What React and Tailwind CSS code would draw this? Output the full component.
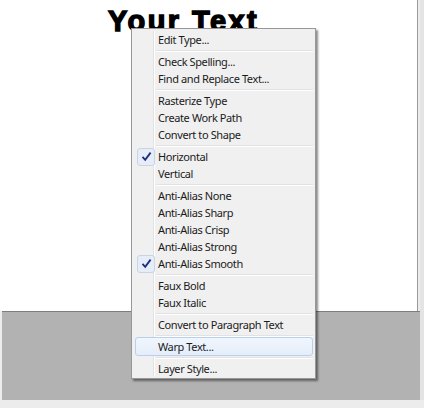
import React from "react";

const Check = () => (
  <div className="absolute left-[4px] top-[-0.5px] w-[18px] h-[18px] rounded-[3px] border border-[#c6d4e8] bg-[#e6edf8] flex items-center justify-center">
    <svg width="11" height="11" viewBox="0 0 11 11">
      <path d="M1.5 5.8 L4.2 8.8 L9.6 1.6" fill="none" stroke="#1a2f7a" strokeWidth="1.8" strokeLinejoin="miter" />
    </svg>
  </div>
);

const Item = ({ label, checked, hover }) => (
  <div className="relative h-[17px] flex items-center">
    {hover && (
      <div className="absolute left-[2px] right-[1px] top-[-1px] bottom-[-1px] rounded-[3px] border border-[#b8d0ee] bg-gradient-to-b from-[#f1f6fd] to-[#e4edf9]" />
    )}
    {checked && <Check />}
    <span className="relative pl-[25px] pb-[1px] text-[11px] tracking-[-0.4px] leading-none text-[#1b1b1b]">{label}</span>
  </div>
);

const Sep = () => (
  <div className="h-[5px] flex items-center pl-[23px] pr-[1px]">
    <div className="w-full h-[2px] border-t border-[#e2e2e2] border-b border-b-white" />
  </div>
);

export default function App() {
  return (
    <div
      className="relative w-[424px] h-[408px] bg-[#ececec] overflow-hidden"
      style={{ fontFamily: '"Noto Sans", Lato, sans-serif' }}
    >
      <div className="flex w-[424px]">
        <div className="w-[420px] flex flex-col">
          <div className="h-[311px] w-[418px] bg-white border-r border-[#9a9a9a] pl-[108px] pt-[7px]">
            <div
              className="text-[29px] leading-none font-bold text-black tracking-[2.4px]"
              style={{ fontFamily: '"Liberation Sans", Arial, sans-serif', WebkitTextStroke: "1.4px black" }}
            >
              Your Text
            </div>
          </div>
          <div className="h-[89px] bg-[#b2b2b2] border-t border-[#7d7d7d] ml-[2px]" />
        </div>
        <div className="w-[4px] h-[400px] bg-[#e4e4e4]" />
      </div>

      <div className="absolute left-[131px] top-[28px] w-[185px] bg-[#f0f0f0] border border-[#979797] shadow-[2px_2px_2px_rgba(0,0,0,0.45)] pt-[2px] pb-[1px] px-[1px]">
        <div className="absolute left-[21px] top-[2px] bottom-[2px] w-[2px] border-l border-[#e2e2e2] border-r border-r-white" />
        <Item label="Edit Type..." />
        <Sep />
        <Item label="Check Spelling..." />
        <Item label="Find and Replace Text..." />
        <Sep />
        <Item label="Rasterize Type" />
        <Item label="Create Work Path" />
        <Item label="Convert to Shape" />
        <Sep />
        <Item label="Horizontal" checked />
        <Item label="Vertical" />
        <Sep />
        <Item label="Anti-Alias None" />
        <Item label="Anti-Alias Sharp" />
        <Item label="Anti-Alias Crisp" />
        <Item label="Anti-Alias Strong" />
        <Item label="Anti-Alias Smooth" checked />
        <Sep />
        <Item label="Faux Bold" />
        <Item label="Faux Italic" />
        <Sep />
        <Item label="Convert to Paragraph Text" />
        <Sep />
        <Item label="Warp Text..." hover />
        <Sep />
        <Item label="Layer Style..." />
      </div>
    </div>
  );
}
